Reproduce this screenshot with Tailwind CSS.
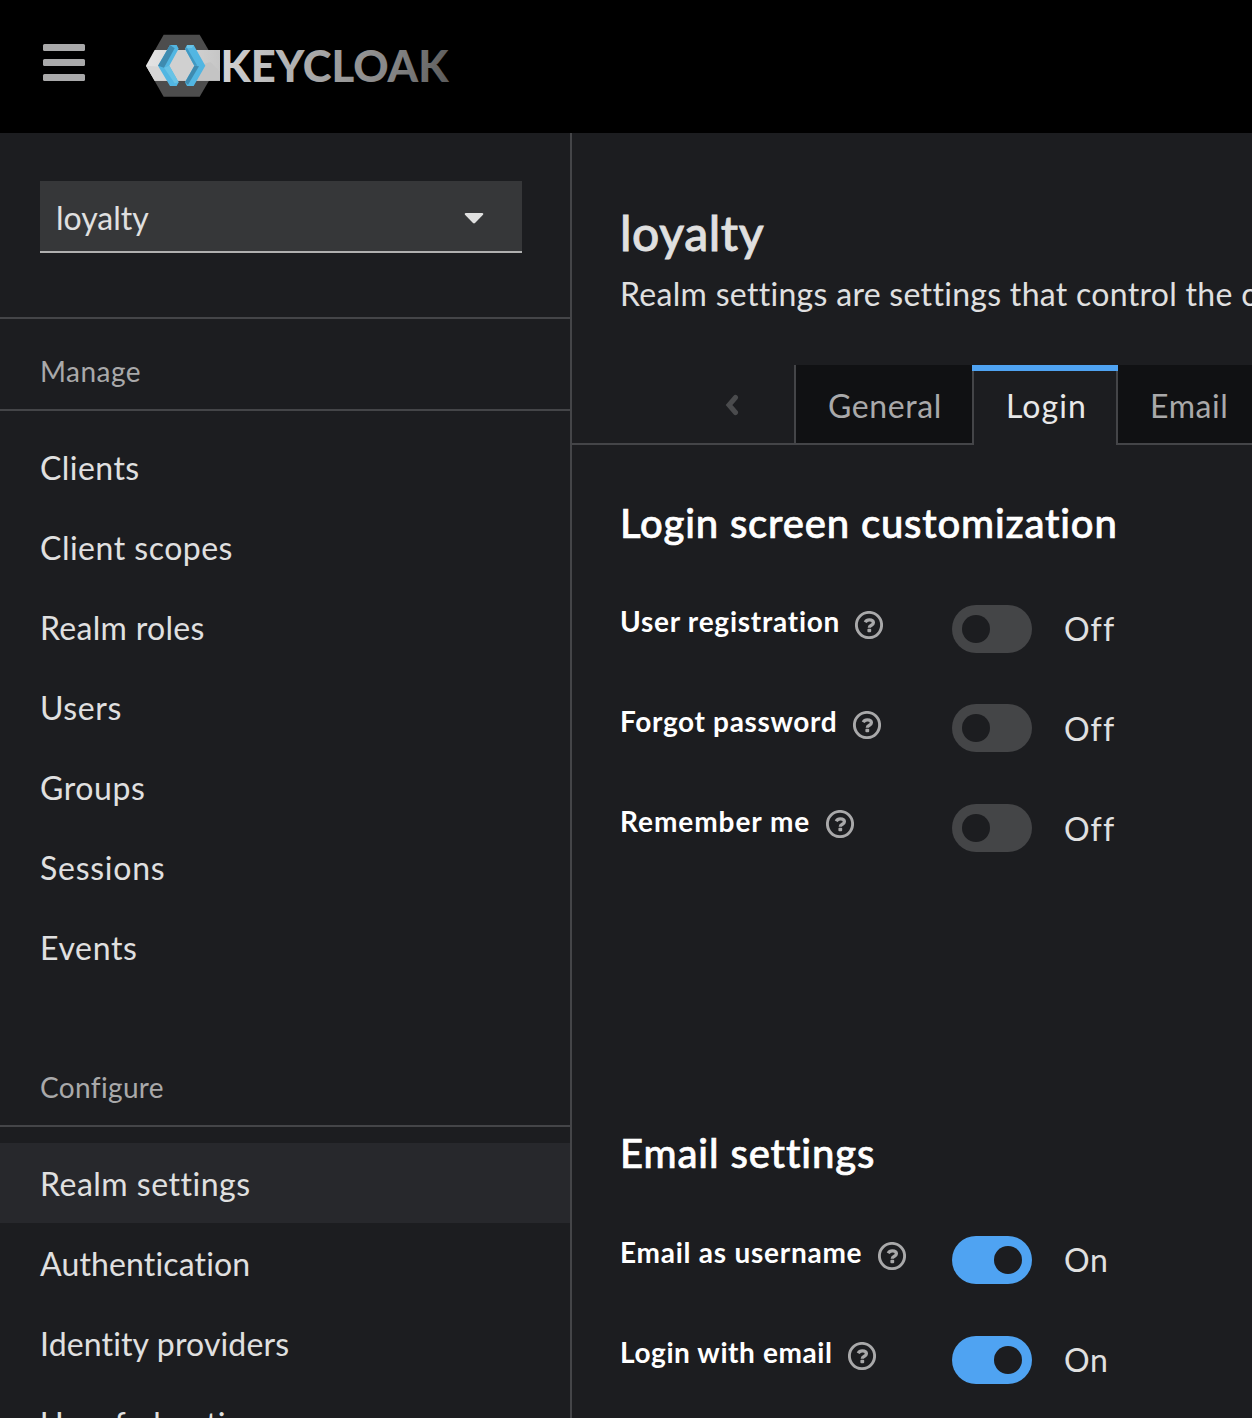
<!DOCTYPE html>
<html lang="en">
<head>
<meta charset="utf-8">
<title>Keycloak Administration Console</title>
<script src="https://cdn.jsdelivr.net/npm/@tailwindcss/browser@4"></script>
</head>
<body class="h-[1418px] w-[1252px] overflow-hidden bg-[#1c1d20] font-['Lato',sans-serif] text-[#e0e0e0]">
<svg class="hidden">
  <symbol id="help" viewBox="0 0 28 28">
    <circle cx="14" cy="14" r="12.6" fill="none" stroke="#a9a9aa" stroke-width="2.9"/>
    <path d="M10.2 11.3C11.100 9.600 12.300 8.900 14.200 8.900c2.400 0 4.200 1.100 4.200 2.900 0 2.600-4.100 2.300-4.100 4.900" fill="none" stroke="#a9a9aa" stroke-width="3.3"/>
    <rect x="12.4" y="17.8" width="3.800" height="3.500" rx="1" fill="#a9a9aa"/>
  </symbol>
</svg>
<div class="flex h-full flex-col">
  <header class="flex h-[133px] shrink-0 items-start bg-black">
    <button class="ml-[43px] mt-[43.5px] flex w-[42px] flex-col gap-[8px]" aria-label="Menu">
      <span class="h-[7px] rounded-[1.5px] bg-[#a9a9aa]"></span>
      <span class="h-[7px] rounded-[1.5px] bg-[#a9a9aa]"></span>
      <span class="h-[7px] rounded-[1.5px] bg-[#a9a9aa]"></span>
    </button>
    <svg class="ml-[59px] mt-[32px] h-[68px] w-[310px]" viewBox="0 0 310 68">
      <defs>
        <linearGradient id="band" x1="0" x2="1"><stop offset="0" stop-color="#e4e4e4"/><stop offset="1" stop-color="#c6c6c6"/></linearGradient>
        <linearGradient id="word" gradientUnits="userSpaceOnUse" x1="79" y1="18" x2="305" y2="49"><stop offset="0" stop-color="#d4d4d4"/><stop offset=".35" stop-color="#adadad"/><stop offset=".75" stop-color="#848484"/><stop offset="1" stop-color="#5c5c5c"/></linearGradient>
      </defs>
      <g transform="scale(.33333)">
        <path d="M59 8H167L221 101 167 194H59L6 101Z" fill="#4d4d4d"/>
        <path d="M32 54H228V146H32L6 101Z" fill="url(#band)"/>
        <path d="M95 54L70 101 95 146H140L160 101 140 54Z" fill="#d0d0d0"/>
        <path d="M160 101L200 90 228 120V146H145Z" fill="#c4c4c4"/>
        <path d="M6 101L50 104 70 146H32Z" fill="#d6d6d6"/>
        <path d="M78 39H98L104 50 76 101 104 151 98 162H78L42 101Z" fill="#52b6e2"/>
        <path d="M78 39L42 101 60 107 92 49Z" fill="#3e8bb0"/>
        <path d="M60 107L76 101 104 151 92 154Z" fill="#68c3e6"/>
        <path d="M129 39H149L184 101 149 162H129L123 151 151 101 123 50Z" fill="#52b6e2"/>
        <path d="M129 39H149L144 48 129 49Z" fill="#68c3e6"/>
        <path d="M151 101L165 103 132 158 123 151Z" fill="#3e8bb0"/>
        <path d="M123 50L129 47 160 101H151Z" fill="#4299c2"/>
      </g>
      <text x="76.500" y="49.500" textLength="228" lengthAdjust="spacingAndGlyphs" class="font-['Lato'] text-[43.500px] font-black" fill="url(#word)">KEYCLOAK</text>
    </svg>
  </header>

  <div class="flex min-h-0 flex-1">
    <nav class="w-[572px] shrink-0 overflow-hidden border-r-2 border-[#444548]">
      <div class="h-[186px] border-b-2 border-[#444548] pl-10 pt-12">
        <button class="flex h-[72px] w-[482px] items-center justify-between border-b-2 border-[#b0b0b0] bg-[#363739] pl-4 pr-[38px] text-[32px]">
          <span class="pt-1">loyalty</span>
          <svg class="mt-[3px] h-[12px] w-[20px]" viewBox="0 0 20 12"><path d="M1.8 1H18.2c1 0 1.4 1 .8 1.7L11 11c-.6.6-1.4.6-2 0L1 2.700C.4 2 .8 1 1.800 1Z" fill="#e0e0e0"/></svg>
        </button>
      </div>
      <div class="flex h-[92px] items-center border-b-2 border-[#444548] pl-10 pt-[14px] text-[28px] tracking-[.5px] text-[#a9a9aa]">Manage</div>
      <ul class="mt-4 text-[32px] [&>li]:flex [&>li]:h-20 [&>li]:items-center [&>li]:pl-10 [&>li]:pt-[2px]">
        <li class="tracking-[.45px]">Clients</li>
        <li class="tracking-[.5px]">Client scopes</li>
        <li class="tracking-[.3px]">Realm roles</li>
        <li class="tracking-[.6px]">Users</li>
        <li class="tracking-[.6px]">Groups</li>
        <li class="tracking-[.75px]">Sessions</li>
        <li class="tracking-[.65px]">Events</li>
      </ul>
      <div class="flex h-[140px] items-center border-b-2 border-[#444548] pl-10 pt-[62px] text-[28px] tracking-[.35px] text-[#a9a9aa]">Configure</div>
      <ul class="mt-4 text-[32px] [&>li]:flex [&>li]:h-20 [&>li]:items-center [&>li]:pl-10 [&>li]:pt-[2px]">
        <li class="bg-[#27282c] tracking-[.5px]">Realm settings</li>
        <li class="tracking-[.15px]">Authentication</li>
        <li class="tracking-[.15px]">Identity providers</li>
        <li class="tracking-[.35px]">User federation</li>
      </ul>
    </nav>

    <main class="min-w-0 flex-1 overflow-hidden whitespace-nowrap">
      <h1 class="ml-12 mt-[70px] h-[60px] text-[48px] font-medium leading-[60px] tracking-[.6px] [-webkit-text-stroke:.8px]">loyalty</h1>
      <p class="ml-12 mt-[7px] h-[48px] text-[32px] leading-[48px] tracking-[.3px]">Realm settings are settings that control the options for users, applications</p>
      <div class="mt-[47px] flex h-[80px] w-[900px] text-[32px] text-[#a9a9aa]">
        <div class="flex w-[222px] items-center border-b-2 border-[#444548] pl-[153px] pt-[2px]">
          <svg class="h-[22px] w-[14px]" viewBox="0 0 14 22"><path d="M10.500 3.500L4 11 10.500 18.500" fill="none" stroke="#4a4b4d" stroke-width="5" stroke-linecap="round" stroke-linejoin="miter"/></svg>
        </div>
        <div class="w-[178px] border-b-2 border-l-2 border-[#444548] bg-[#101113] pl-[32px] leading-[81px] tracking-[.6px]">General</div>
        <div class="flex w-[146px] flex-col border-t-[6px] border-[#4fa3f2] text-[#e8e8e8]">
          <div class="h-full border-x-2 border-[#444548] pl-[32px] leading-[69px] tracking-[1.1px]">Login</div>
        </div>
        <div class="flex-1 border-b-2 border-[#444548] bg-[#101113] pl-[32px] leading-[81px] tracking-[.6px]">Email</div>
      </div>

      <section class="ml-12 mt-[46px] text-white">
        <h2 class="h-[60px] pt-[1.500px] text-[40px] font-medium leading-[60px] tracking-[.82px] [-webkit-text-stroke:.7px]">Login screen customization</h2>
        <div class="mt-[54px] grid grid-cols-[332px_112px_auto] gap-y-[51.400px] [&>*]:h-12">
          <div class="flex"><span class="w-[235px] text-[28px] font-bold leading-[33px] tracking-[.75px]">User registration</span><svg class="mt-[6px] size-7"><use href="#help"/></svg></div>
          <div class="w-20 rounded-full bg-[#444547] p-[10px]"><div class="size-7 rounded-full bg-[#1c1d20]"></div></div>
          <span class="text-[32px] leading-[48px] tracking-[1.1px] text-[#e0e0e0]">Off</span>

          <div class="flex"><span class="w-[233px] text-[28px] font-bold leading-[34px] tracking-[.65px]">Forgot password</span><svg class="mt-[6.500px] size-7"><use href="#help"/></svg></div>
          <div class="w-20 rounded-full bg-[#444547] p-[10px]"><div class="size-7 rounded-full bg-[#1c1d20]"></div></div>
          <span class="text-[32px] leading-[49px] tracking-[1.1px] text-[#e0e0e0]">Off</span>

          <div class="flex"><span class="w-[206px] text-[28px] font-bold leading-[34px] tracking-[.95px]">Remember me</span><svg class="mt-[6px] size-7"><use href="#help"/></svg></div>
          <div class="w-20 rounded-full bg-[#444547] p-[10px]"><div class="size-7 rounded-full bg-[#1c1d20]"></div></div>
          <span class="text-[32px] leading-[49px] tracking-[1.1px] text-[#e0e0e0]">Off</span>
        </div>
      </section>

      <section class="ml-12 mt-[271px] text-white">
        <h2 class="h-[60px] text-[40px] font-medium leading-[61px] tracking-[.9px] [-webkit-text-stroke:.7px]">Email settings</h2>
        <div class="mt-[53px] grid grid-cols-[332px_112px_auto] gap-y-[52px] [&>*]:h-12">
          <div class="flex"><span class="w-[258px] text-[28px] font-bold leading-[33px] tracking-[.75px]">Email as username</span><svg class="mt-[6px] size-7"><use href="#help"/></svg></div>
          <div class="flex w-20 justify-end rounded-full bg-[#4fa3f2] p-[10px]"><div class="size-7 rounded-full bg-[#1c1d20]"></div></div>
          <span class="text-[32px] leading-[48px] tracking-[.8px] text-[#e0e0e0]">On</span>

          <div class="flex"><span class="w-[228px] text-[28px] font-bold leading-[33px] tracking-[.6px]">Login with email</span><svg class="mt-[6px] size-7"><use href="#help"/></svg></div>
          <div class="flex w-20 justify-end rounded-full bg-[#4fa3f2] p-[10px]"><div class="size-7 rounded-full bg-[#1c1d20]"></div></div>
          <span class="text-[32px] leading-[48px] tracking-[.8px] text-[#e0e0e0]">On</span>
        </div>
      </section>
    </main>
  </div>
</div>
</body>
</html>
